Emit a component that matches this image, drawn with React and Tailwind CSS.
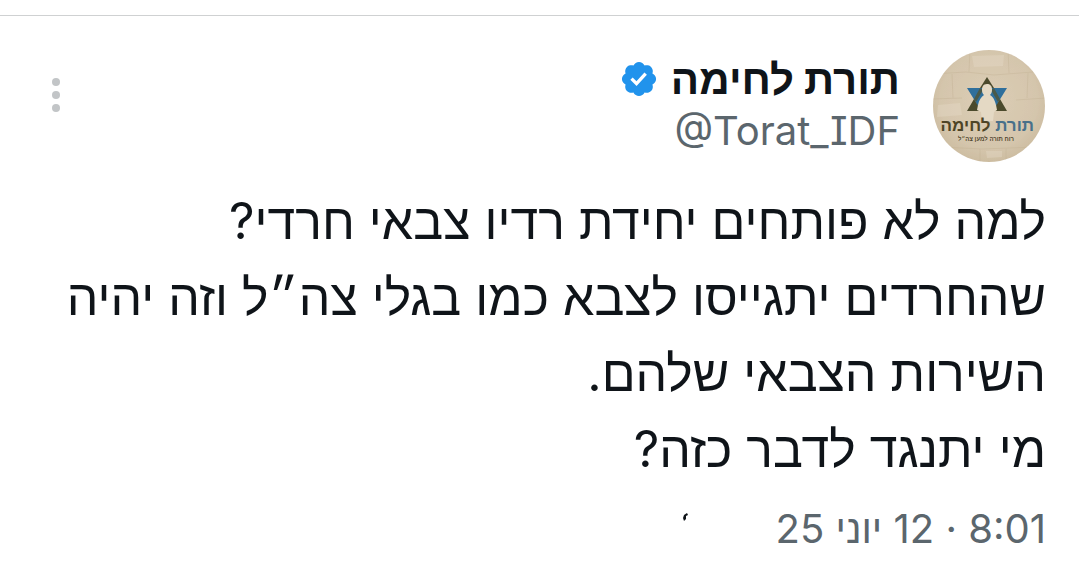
import React from 'react';

const lines = [
    'למה לא פותחים יחידת רדיו צבאי חרדי?',
    'שהחרדים יתגייסו לצבא כמו בגלי צה״ל וזה יהיה השירות הצבאי שלהם.',
    'מי יתנגד לדבר כזה?',
];

const Avatar = () => (
    <svg viewBox="0 0 114 114" className="size-[114px] shrink-0" role="img" aria-label="תורת לחימה">
        <defs>
            <clipPath id="avatar-circle">
                <circle cx="57" cy="57" r="56" />
            </clipPath>
            <radialGradient id="stone" cx="50%" cy="45%" r="60%">
                <stop offset="0" stopColor="#dccdb5" />
                <stop offset="0.7" stopColor="#d5c6ad" />
                <stop offset="1" stopColor="#c9b99c" />
            </radialGradient>
        </defs>
        <g clipPath="url(#avatar-circle)">
            <rect width="114" height="114" fill="url(#stone)" />
            {/* stone wall joints */}
            <g stroke="#bfae90" strokeWidth="1" fill="none" opacity="0.35">
                <path d="M0 25 L34 23 L62 26 L114 22" />
                <path d="M0 50 L30 49 M84 51 L114 49" />
                <path d="M10 98 L50 100 L104 98" />
                <path d="M38 0 L37 23 M76 0 L77 24 M20 25 L21 49 M96 24 L95 49 M48 100 V114 M74 99 V114" />
            </g>
            <g fill="#e8ddca" opacity="0.35">
                <path d="M40 7 L72 6 L71 17 L42 18 Z" />
                <path d="M6 56 L28 54 L30 66 L5 68 Z" />
                <path d="M54 102 L70 102 L70 108 L55 109 Z" />
            </g>
        </g>
        {/* star of david with the figure in front */}
        <path d="M55 28 L62 39 H48 Z" fill="#4b4a2c" />
        <path d="M35 39 H75 L67 52 L62 62 H48 L43 52 Z" fill="#2f6f9c" />
        <path d="M35 62 L42 50 L49 62 Z M75 62 L68 50 L61 62 Z" fill="#4b4a2c" />
        <path d="M48 39 L42 50 L44 53 L51 41 Z M62 39 L68 50 L66 53 L59 41 Z" fill="#4a5a4a" />
        <path d="M55 35 C51 35 50 38 50 41 C50 44 51 45 52 46 C49 48 47 51 46 56 L45 61 L49 63 L50 72 H61 L62 63 L65 61 C64 54 62 48 58 46 C60 44 60 42 60 40 C60 37 58 35 55 35 Z" fill="#e4d9c4" />
        <text x="102" y="82" textAnchor="start" direction="rtl" className="font-['Liberation_Sans',sans-serif] text-[17px] font-bold" fill="#4d4426">
            <tspan fill="#48708a">תורת</tspan> לחימה
        </text>
        <text x="82" y="92" textAnchor="start" direction="rtl" className="font-['Liberation_Sans',sans-serif] text-[6px] font-bold" fill="#51462f">
            רוח תורה למען צה״ל
        </text>
    </svg>
);

const VerifiedBadge = () => (
    <svg viewBox="0 0 22 22" className="size-10 shrink-0" role="img" aria-label="חשבון מאומת">
        <path
            fill="#2193ec"
            d="M20.396 11c-.018-.646-.215-1.275-.57-1.816-.354-.54-.852-.972-1.438-1.246.223-.607.27-1.264.14-1.897-.131-.634-.437-1.218-.882-1.687-.47-.445-1.053-.75-1.687-.882-.633-.13-1.29-.083-1.897.14-.273-.587-.704-1.086-1.245-1.44S11.647 1.62 11 1.604c-.646.017-1.273.213-1.813.568s-.969.854-1.24 1.44c-.608-.223-1.267-.272-1.902-.14-.635.13-1.22.436-1.69.882-.445.47-.749 1.055-.878 1.688-.13.633-.08 1.29.144 1.896-.587.274-1.087.705-1.443 1.245-.356.54-.555 1.17-.574 1.817.02.647.218 1.276.574 1.817.356.54.856.972 1.443 1.245-.224.606-.274 1.263-.144 1.896.13.634.433 1.218.877 1.688.47.443 1.054.747 1.687.878.633.132 1.29.084 1.897-.136.274.586.705 1.084 1.246 1.439.54.354 1.17.551 1.816.569.647-.016 1.276-.213 1.817-.567s.972-.854 1.245-1.44c.604.239 1.266.296 1.903.164.636-.132 1.22-.447 1.68-.907.46-.46.776-1.044.908-1.681s.075-1.299-.165-1.903c.586-.274 1.084-.705 1.439-1.246.354-.54.551-1.17.569-1.816z"
        />
        <path fill="#fff" d="M9.662 14.85l-3.429-3.428 1.293-1.302 2.072 2.072 4.4-4.794 1.347 1.246z" />
    </svg>
);

const App = () => {
    return (
        <main dir="rtl" className="bg-white pt-[15px] font-[Inter,'Liberation_Sans',sans-serif] text-[#0f1419]">
            <article className="border-t border-[#cfd1d2] px-[33px] pt-[33px]">
                <header className="flex items-start gap-8">
                    <Avatar />
                    <div className="flex-1 pt-1">
                        <div className="flex items-center gap-3">
                            <h1 className="text-[42px] leading-[52px] font-bold">תורת לחימה</h1>
                            <VerifiedBadge />
                        </div>
                        <a
                            href="#profile"
                            dir="ltr"
                            className="block text-right text-[40px] leading-[52px] text-[#5b666d] [font-feature-settings:'cv08']"
                        >
                            @Torat_IDF
                        </a>
                    </div>
                    <button type="button" aria-label="עוד" className="flex w-[46px] justify-center pt-7">
                        <svg viewBox="0 0 10 36" className="h-9 w-[10px]" fill="#c2c5c7">
                            <circle cx="5" cy="5" r="4" />
                            <circle cx="5" cy="18" r="4" />
                            <circle cx="5" cy="31" r="4" />
                        </svg>
                    </button>
                </header>

                <div className="mt-5 text-[50px] leading-[76px]">
                    {lines.map((line) => (
                        <p key={line}>{line}</p>
                    ))}
                </div>

                <footer className="flex items-center gap-[88px] pt-1 text-[40px] leading-[76px] text-[#5b666d]">
                    <time dateTime="2025-06-12T08:01">8:01 · 12 יוני 25</time>
                    <svg viewBox="0 0 6 8" className="mb-6 h-2 w-[6px]" aria-hidden="true">
                        <path d="M5 0 L2 2 L1 5 L2 8 L4 6 L4 3 L6 2 Z" fill="#0f1419" />
                    </svg>
                </footer>
            </article>
        </main>
    );
};

export default App;
